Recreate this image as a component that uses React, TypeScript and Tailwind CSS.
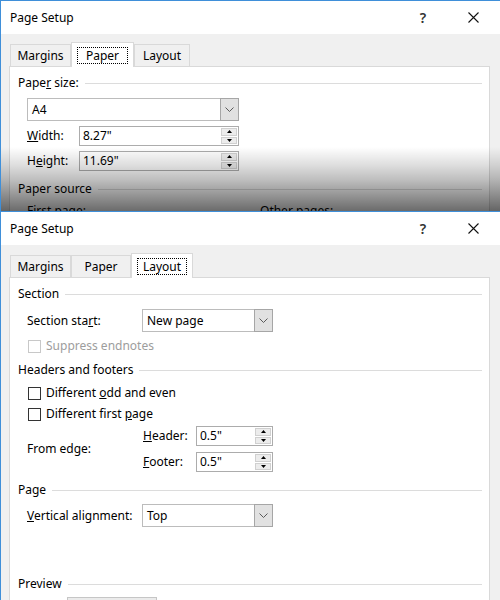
import React from "react";

const Chevron = () => (
  <svg width="9" height="5" viewBox="0 0 9 5">
    <path d="M0.5 0.5 L4.5 4.5 L8.5 0.5" fill="none" stroke="#5a5a5a" strokeWidth="1" />
  </svg>
);

const TriUp = () => (
  <svg width="5" height="3" viewBox="0 0 5 3">
    <path d="M2.5 0 L5 3 L0 3 Z" fill="#000" />
  </svg>
);

const TriDown = () => (
  <svg width="5" height="3" viewBox="0 0 5 3">
    <path d="M0 0 L5 0 L2.5 3 Z" fill="#000" />
  </svg>
);

const CloseIcon = () => (
  <svg width="11" height="11" viewBox="0 0 11 11">
    <path d="M0.5 0.5 L10.5 10.5 M10.5 0.5 L0.5 10.5" stroke="#111" strokeWidth="1.1" fill="none" />
  </svg>
);

function GroupHeader({ children }: { children: React.ReactNode }) {
  return (
    <div className="flex items-center h-[16px]">
      <span className="whitespace-nowrap">{children}</span>
      <div className="flex-1 h-px bg-[#dcdcdc] ml-[6px]" />
    </div>
  );
}

function Select({ value, className }: { value: string; className: string }) {
  return (
    <div className={"flex h-[23px] border border-[#bcbcbc] bg-white " + className}>
      <div className="flex-1 pl-[4px] flex items-center">{value}</div>
      <div className="w-[19px] -my-px -mr-px flex items-center justify-center border border-[#a6a6a6] bg-[#e1e1e1]">
        <Chevron />
      </div>
    </div>
  );
}

function SpinInput({ value, className }: { value: string; className: string }) {
  return (
    <div className={"flex h-[20px] border border-[#acacac] bg-white " + className}>
      <div className="flex-1 pl-[3px] flex items-center">{value}</div>
      <div className="flex flex-col gap-[1px] w-[16px] py-px mr-px">
        <div className="flex-1 flex items-center justify-center bg-[#ececec] border border-[#d0d0d0]">
          <TriUp />
        </div>
        <div className="flex-1 flex items-center justify-center bg-[#ececec] border border-[#d0d0d0]">
          <TriDown />
        </div>
      </div>
    </div>
  );
}

function Checkbox({ children, disabled }: { children: React.ReactNode; disabled?: boolean }) {
  return (
    <div className="flex items-center h-[16px] ml-[10px]">
      <div
        className={
          "w-[13px] h-[13px] border bg-white " + (disabled ? "border-[#c8c8c8]" : "border-[#333333]")
        }
      />
      <span className={"ml-[5px] " + (disabled ? "text-[#9d9d9d]" : "")}>{children}</span>
    </div>
  );
}

function TitleBar() {
  return (
    <div className="h-[33px] shrink-0 bg-white flex items-center pl-[9px] pr-[2px]">
      <span className="text-[12px]">Page Setup</span>
      <div className="ml-auto flex h-full">
        <div className="w-[50px] flex items-center justify-center text-[14px] font-semibold text-[#333]">?</div>
        <div className="w-[50px] flex items-center justify-center">
          <CloseIcon />
        </div>
      </div>
    </div>
  );
}

function Tab({ label, selected, className }: { label: string; selected?: boolean; className: string }) {
  if (selected) {
    return (
      <div
        className={
          "h-[25px] bg-white border-t border-l border-r border-[#d9d9d9] flex px-[5px] pt-[4px] pb-[3px] " +
          className
        }
      >
        <div className="flex-1 flex items-center justify-center border border-dotted border-[#000]">
          {label}
        </div>
      </div>
    );
  }
  return (
    <div
      className={
        "h-[22px] mb-px bg-[#f0f0f0] border-t border-l border-r border-[#d9d9d9] flex items-center justify-center " +
        className
      }
    >
      {label}
    </div>
  );
}

function PaperDialog() {
  return (
    <div className="relative h-[211px] shrink-0 overflow-hidden flex flex-col border-t border-l border-[#3f8fd9]">
      <TitleBar />
      <div className="flex-1 min-h-0 overflow-hidden bg-[#f0f0f0] pl-[8px] pt-[8px]">
        <div className="flex items-end h-[25px] ml-[1px] relative z-10">
          <Tab label="Margins" className="w-[61px]" />
          <Tab label="Paper" selected className="w-[63px]" />
          <Tab label="Layout" className="w-[56px]" />
        </div>
        <div className="-mt-px w-[481px] h-[300px] bg-white border border-[#d9d9d9] pt-[8px] pl-[8px] pr-[7px]">
          <GroupHeader>
            Pape<u>r</u> size:
          </GroupHeader>
          <div className="ml-[9px] mt-[7px]">
            <Select value="A4" className="w-[212px]" />
          </div>
          <div className="ml-[9px] mt-[5px] flex items-center">
            <span className="w-[52px]">
              <u>W</u>idth:
            </span>
            <SpinInput value={'8.27"'} className="w-[160px]" />
          </div>
          <div className="ml-[9px] mt-[5px] flex items-center">
            <span className="w-[52px]">
              H<u>e</u>ight:
            </span>
            <SpinInput value={'11.69"'} className="w-[160px]" />
          </div>
          <div className="mt-[10px]">
            <GroupHeader>Paper source</GroupHeader>
          </div>
          <div className="mt-[6px] ml-[9px] flex">
            <span className="w-[233px]">
              <u>F</u>irst page:
            </span>
            <span>
              <u>O</u>ther pages:
            </span>
          </div>
        </div>
      </div>
      <div className="absolute left-0 right-0 top-[146px] bottom-0 bg-[linear-gradient(to_bottom,rgba(0,0,0,0)_0%,rgba(0,0,0,0.13)_28%,rgba(0,0,0,0.26)_52%,rgba(0,0,0,0.58)_100%)]" />
    </div>
  );
}

function LayoutDialog() {
  return (
    <div className="flex-1 min-h-0 overflow-hidden flex flex-col border-t border-l border-[#3f8fd9]">
      <TitleBar />
      <div className="flex-1 min-h-0 overflow-hidden bg-[#f0f0f0] pl-[8px] pt-[8px]">
        <div className="flex items-end h-[25px] ml-[1px] relative z-10">
          <Tab label="Margins" className="w-[61px]" />
          <Tab label="Paper" className="w-[60px]" />
          <Tab label="Layout" selected className="w-[62px]" />
        </div>
        <div className="-mt-px w-[481px] h-[400px] bg-white border border-[#d9d9d9] pt-[8px] pl-[8px] pr-[7px]">
          <GroupHeader>Section</GroupHeader>
          <div className="mt-[7px] ml-[9px] flex items-center">
            <span className="w-[115px]">
              Section sta<u>r</u>t:
            </span>
            <Select value="New page" className="w-[131px]" />
          </div>
          <div className="mt-[6px]">
            <Checkbox disabled>Suppress endnotes</Checkbox>
          </div>
          <div className="mt-[8px]">
            <GroupHeader>Headers and footers</GroupHeader>
          </div>
          <div className="mt-[7px]">
            <Checkbox>
              Different <u>o</u>dd and even
            </Checkbox>
          </div>
          <div className="mt-[5px]">
            <Checkbox>
              Different first <u>p</u>age
            </Checkbox>
          </div>
          <div className="mt-[4px] ml-[9px] flex items-center">
            <span className="w-[116px]">From edge:</span>
            <div className="flex flex-col gap-[6px]">
              <div className="flex items-center">
                <span className="w-[53px]">
                  <u>H</u>eader:
                </span>
                <SpinInput value={'0.5"'} className="w-[77px]" />
              </div>
              <div className="flex items-center">
                <span className="w-[53px]">
                  <u>F</u>ooter:
                </span>
                <SpinInput value={'0.5"'} className="w-[77px]" />
              </div>
            </div>
          </div>
          <div className="mt-[10px]">
            <GroupHeader>Page</GroupHeader>
          </div>
          <div className="mt-[6px] ml-[9px] flex items-center">
            <span className="w-[115px]">
              <u>V</u>ertical alignment:
            </span>
            <Select value="Top" className="w-[131px]" />
          </div>
          <div className="mt-[49px]">
            <GroupHeader>Preview</GroupHeader>
          </div>
          <div className="mt-[5px] ml-[49px] w-[90px] h-[30px] border border-[#c6c6c6] bg-[#ebebeb]" />
        </div>
      </div>
    </div>
  );
}

export default function App() {
  return (
    <div className="w-[500px] h-[600px] overflow-hidden bg-white flex flex-col text-[12px] leading-[16px] text-black font-['Noto_Sans',sans-serif]">
      <PaperDialog />
      <LayoutDialog />
    </div>
  );
}
